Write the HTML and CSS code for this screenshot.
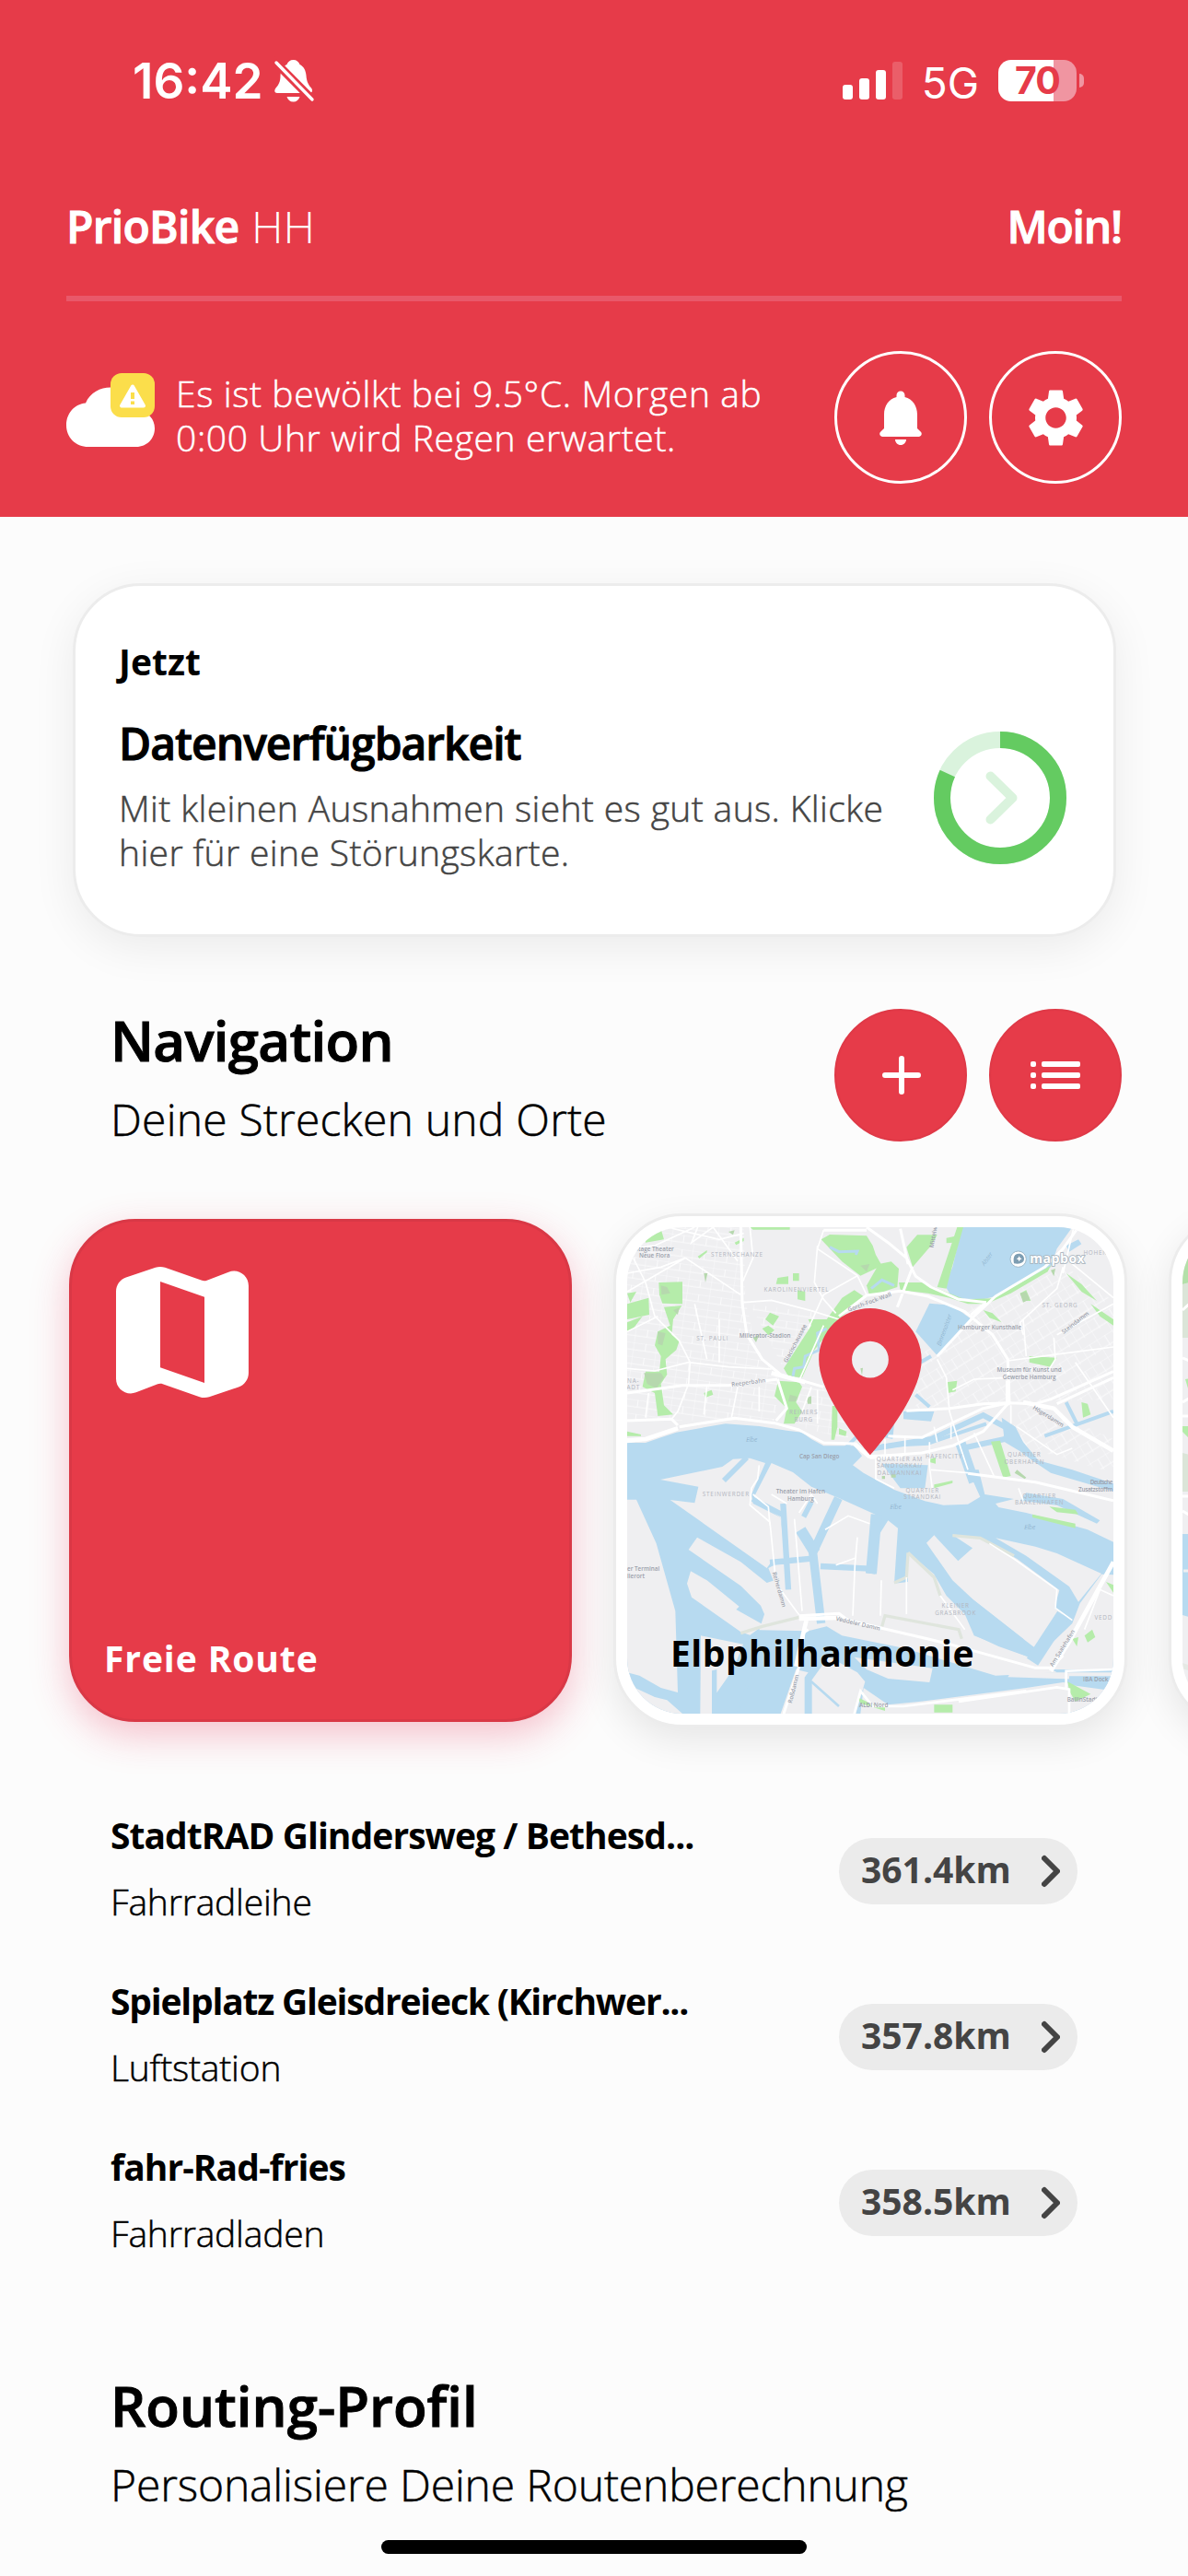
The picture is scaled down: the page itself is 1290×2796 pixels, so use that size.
FILE: index.html
```html
<!DOCTYPE html>
<html lang="de">
<head>
<meta charset="utf-8">
<title>PrioBike HH</title>
<link rel="stylesheet" href="styles.css">
</head>
<body>
<div class="screen">
  <header class="header">
    <div class="status">
      <div class="status-left">
        <span class="time">16:42</span>
        <svg class="mute" viewBox="0 0 43 46">
          <path fill="#fff" d="M20.500 0C24 0 26.500 2 27.500 5C31.500 7 34 11 34.500 17C35 24 37 27 40 30.500C42 33 41 36 38 36H3C0 36-.5 33 1.500 30.500C4.500 27 6.500 24 6.500 17C7 11 9.500 7 13.500 5C14.500 2 17 0 20.500 0ZM13.500 40H27.500C26.500 43.500 24 45.500 20.500 45.500S14.500 43.500 13.500 40Z"/>
          <path stroke="#e63b49" stroke-width="9" d="M-2-.5L45 47"/>
          <path stroke="#fff" stroke-width="3.400" stroke-linecap="round" d="M2 3L41 43"/>
        </svg>
      </div>
      <div class="status-right">
        <svg class="signal" viewBox="0 0 65 41" fill="#fff">
          <rect x="0" y="25" width="11" height="16" rx="3"/>
          <rect x="18" y="18" width="11" height="23" rx="3"/>
          <rect x="36" y="9" width="11" height="32" rx="3"/>
          <rect x="54" y="0" width="11" height="41" rx="3" opacity=".18"/>
        </svg>
        <span class="net">5G</span>
        <div class="battery"><span class="level">70</span></div>
        <span class="nub"></span>
      </div>
    </div>
    <div class="title-row">
      <div class="brand"><b>PrioBike</b> <span>HH</span></div>
      <div class="hello">Moin!</div>
    </div>
    <div class="rule"></div>
    <div class="weather">
      <svg class="cloud" viewBox="0 0 96 80">
        <path fill="#fff" d="M24 80C10 80 0 69.500 0 56.500C0 43 9.500 33.500 21 32.500C26 21 37 15.600 48 15.600C64 15.600 76 26 79 41C89 42 96 50 96 60C96 71 87.500 80 76 80Z"/>
        <rect x="48" width="48" height="48" rx="12" fill="#fbde4b"/>
        <path fill="#fff" stroke="#fff" stroke-width="4" stroke-linejoin="round" d="M72 14.500L60 35.500H84Z"/>
        <path stroke="#fbde4b" stroke-width="4" d="M72 21V28M72 30.500V34"/>
      </svg>
      <p class="forecast">Es ist bewölkt bei 9.5°C. Morgen ab<br>0:00 Uhr wird Regen erwartet.</p>
      <div class="buttons">
        <div class="round outline"><svg width="72" height="72" viewBox="0 0 24 24" fill="#fff"><path d="M12 22c1.100 0 2-.9 2-2h-4c0 1.100.89 2 2 2zm6-6v-5c0-3.070-1.640-5.640-4.500-6.320V4c0-.83-.67-1.500-1.500-1.500s-1.500.67-1.500 1.500v.68C7.630 5.360 6 7.920 6 11v5l-1.290 1.290c-.63.63-.19 1.710.7 1.710h13.170c.89 0 1.340-1.080.71-1.710L18 16z"/></svg></div>
        <div class="round outline"><svg width="75" height="75" viewBox="0 0 24 24" fill="#fff"><path d="M19.140 12.940c.04-.3.06-.61.06-.94 0-.32-.02-.64-.07-.94l2.030-1.580c.18-.14.23-.41.12-.61l-1.920-3.320c-.12-.22-.37-.29-.59-.22l-2.390.96c-.5-.38-1.030-.7-1.620-.94l-.36-2.540c-.04-.24-.24-.41-.48-.41h-3.840c-.24 0-.43.17-.47.41l-.36 2.540c-.59.24-1.130.57-1.620.94l-2.390-.96c-.22-.08-.47 0-.59.22L2.740 8.870c-.12.21-.08.47.12.61l2.030 1.580c-.05.3-.09.63-.09.94s.02.64.07.94l-2.030 1.580c-.18.14-.23.41-.12.61l1.920 3.320c.12.22.37.29.59.22l2.390-.96c.5.38 1.030.7 1.620.94l.36 2.540c.05.24.24.41.48.41h3.840c.24 0 .44-.17.47-.41l.36-2.540c.59-.24 1.130-.56 1.620-.94l2.390.96c.22.08.47 0 .59-.22l1.920-3.320c.12-.22.07-.47-.12-.61l-2.010-1.580zM12 15.600c-1.980 0-3.600-1.620-3.600-3.600s1.620-3.600 3.600-3.600 3.600 1.620 3.600 3.600-1.620 3.600-3.600 3.600z"/></svg></div>
      </div>
    </div>
  </header>

  <main>
    <section class="info-card">
      <div class="info-text">
        <h4>Jetzt</h4>
        <h3>Datenverfügbarkeit</h3>
        <p>Mit kleinen Ausnahmen sieht es gut aus. Klicke<br>hier für eine Störungskarte.</p>
      </div>
      <svg class="ring" viewBox="0 0 144 144" fill="none">
        <circle cx="72" cy="72" r="63" stroke="#daf3dd" stroke-width="18"/>
        <circle cx="72" cy="72" r="63" stroke="#64cb61" stroke-width="18" pathLength="100" stroke-dasharray="81.900 100" transform="rotate(-90 72 72)"/>
        <path d="M61.500 48.500L85.500 72L61.500 95.500" stroke="#daf3dd" stroke-width="10" stroke-linecap="round" stroke-linejoin="round"/>
      </svg>
    </section>

    <section class="section nav">
      <div>
        <h2>Navigation</h2>
        <p class="sub sub-nav">Deine Strecken und Orte</p>
      </div>
      <div class="buttons">
        <div class="round solid"><svg width="72" height="72" viewBox="0 0 72 72" stroke="#fff" stroke-width="6" stroke-linecap="round"><path d="M37 18V54M19 36H55"/></svg></div>
        <div class="round solid"><svg width="72" height="72" viewBox="0 0 72 72" fill="#fff"><rect x="9" y="21" width="6" height="6" rx="2"/><rect x="9" y="33" width="6" height="6" rx="2"/><rect x="9" y="45" width="6" height="6" rx="2"/><rect x="21" y="21" width="42" height="6" rx="2"/><rect x="21" y="33" width="42" height="6" rx="2"/><rect x="21" y="45" width="42" height="6" rx="2"/></svg></div>
      </div>
    </section>

    <section class="carousel">
      <article class="free-card">
        <svg width="192" height="192" viewBox="0 0 24 24" fill="#fff"><path d="M14.650 4.980l-5-1.750c-.42-.15-.88-.15-1.300-.01L4.360 4.560C3.550 4.840 3 5.600 3 6.460v11.850c0 1.410 1.410 2.370 2.720 1.860l2.930-1.140c.22-.09.47-.09.69-.01l5 1.750c.42.15.88.15 1.300.01l3.990-1.340c.81-.27 1.360-1.040 1.360-1.900V5.690c0-1.410-1.410-2.370-2.720-1.860l-2.930 1.140c-.22.08-.46.09-.69.01zM15 18.890l-6-2.110V5.110l6 2.110v11.670z"/></svg>
        <span>Freie Route</span>
      </article>

      <article class="map-card">
        <svg class="map" viewBox="0 0 1584 1584" fill="none">
          <defs>
            <pattern id="grid-a" width="74" height="46" patternUnits="userSpaceOnUse" patternTransform="rotate(8)"><path d="M0 0H74M0 0V46M40 0V24M0 24H74" stroke="#fafafb" stroke-width="3"/></pattern>
            <pattern id="grid-b" width="58" height="66" patternUnits="userSpaceOnUse" patternTransform="rotate(-32)"><path d="M0 0H58M0 0V66M30 0V40M0 34H58" stroke="#fafafb" stroke-width="3"/></pattern>
          </defs>
          <rect width="1584" height="1584" fill="#efeff1"/>
          <path fill="url(#grid-a)" d="M0 0H380L385 240L420 390L500 500L480 630L0 630ZM400 250L620 280L520 480ZM540 520L720 530V690L560 650Z"/>
          <path fill="url(#grid-b)" d="M1090 270L1430 130L1584 240V560L1240 570L940 590V440ZM1290 560L1584 690V800L1240 700Z"/>

          <!-- water -->
          <g fill="#b7daf0">
            <path d="M0 702L60 702L110 685L160 668L250 652L320 640L430 648L520 662L570 668L600 690L640 712L740 712L765 745L735 775L770 800L870 855L970 892L1030 905L1110 902L1150 878L1110 790L1145 790L1165 870L1260 885L1200 900L1210 912L1300 930L1420 962L1500 985L1584 1025V1584H0Z"/>
            <path d="M1090 0H1450L1400 70L1380 130L1260 190L1200 225L1160 235L1060 232L1035 190L1060 130Z"/>
            <path d="M985 248L1060 255L1122 300L1010 418L940 340Z"/>
            <path d="M900 600L1000 600L990 632L900 625ZM820 640L870 640L865 690L820 680ZM1220 620L1265 650L1290 700L1340 760L1450 790L1584 835V860L1380 800L1320 760L1280 730L1230 700Z"/>
            <path d="M830 770L980 775L970 850L890 850Z"/>
            <path d="M1300 865L1420 885L1540 955L1530 965L1400 905L1280 890Z"/>
            <path d="M1430 60L1470 40L1480 55L1440 80Z"/>
          </g>
          <g stroke="#b7daf0">
            <path stroke-width="18" d="M790 722L990 690L1160 612L1230 650M1090 720L1230 690L1260 650"/>
            <path stroke-width="12" d="M830 712L980 704L1170 640M940 545L985 585M955 440L990 420M1430 570L1465 640M1360 680L1584 600M700 730L790 640"/>
            <path stroke-width="34" d="M1085 700L1130 830"/>
          </g>

          <!-- port islands -->
          <g fill="#efeff1">
            <path d="M0 887H30L95 1030L157 1250L165 1515L110 1500L40 1460L0 1450Z"/>
            <path d="M0 1488L90 1530L130 1540L180 1584H0Z"/>
            <path d="M108 822L310 780L345 755L400 752L450 768L405 870L410 900L500 945L515 1080L470 1090L455 1110L140 888L220 898L232 845Z"/>
            <path d="M228 1010L370 1090L455 1158L480 1150L560 1262L460 1290L435 1232L370 1168L200 1050Z"/>
            <path d="M207 1120L260 1150L365 1235L355 1245L445 1295L400 1328L370 1318L210 1205L195 1160Z"/>
            <path d="M470 768L540 798L600 845L690 882L808 935L800 1000L778 1125L808 1130L815 1010L850 955L882 980L870 1160L915 1155V1058L1000 1130L1040 1200L1100 1260L1130 1330L1310 1400L1400 1450L1200 1460L900 1370L700 1330L650 1300L590 1315L430 1312L480 1160L460 1110L520 1080L500 945L410 885Z"/>
            <path d="M975 1028L1000 1003L1078 1087L1125 1045L1060 1002L1150 1012L1270 1080L1408 1182L1392 1240L1420 1262L1335 1375L1290 1340L1130 1215L1060 1150Z"/>
            <path d="M1584 1132L1545 1130L1475 1225L1450 1290L1310 1425L1340 1440H1584Z"/>
            <path d="M1200 1012L1330 1040L1400 1062L1545 1128L1470 1220L1440 1170L1300 1070Z"/>
            <path d="M240 1330L378 1358L345 1440L292 1516V1440L276 1444V1584H238Z"/>
            <path d="M590 1450L650 1395L750 1450L775 1480L745 1584H500L550 1440Z"/>
            <path d="M740 1400L995 1436L985 1482L850 1470L780 1440Z"/>
            <path d="M770 1500L850 1555L950 1545L1300 1500L1420 1482L1584 1500V1584H760Z"/>
            <path d="M1250 1450H1584V1475L1400 1470L1240 1465Z"/>
          </g>
          <path fill="#b7daf0" d="M1440 1462H1584V1510L1440 1490Z"/>
          <path fill="#b7daf0" d="M1000 1130L1130 1215L1290 1340L1310 1400L1210 1365L1135 1330L1100 1255L1040 1195Z"/>
          <g stroke="#b7daf0">
            <path stroke-width="17" d="M315 825L390 750M408 885L510 938M600 895L575 943"/>
            <path stroke-width="19" d="M508 900L525 1180M465 1092L610 1078M630 1104L790 1112"/>
            <path stroke-width="28" d="M688 882L605 1060L632 1290"/>
            <path stroke-width="36" d="M565 985L612 1060M812 935L795 1128"/>
            <path stroke-width="44" d="M1420 1262L1320 1415"/>
            <path stroke-width="24" d="M590 1330L640 1400L590 1470L590 1584"/>
            <path stroke-width="8" d="M600 1480L690 1560M440 1345L360 1584"/>
          </g>
          <path stroke="#dfe5dd" stroke-width="10" d="M915 1060L910 1140L870 1158M915 1060L1000 1140L1020 1200M1060 1004L1150 1012L1260 1070M370 1322L440 1300L560 1270M1090 1340L1080 1310L840 1265L830 1300"/>

          <!-- parks -->
          <g fill="#b5ecaa">
            <path d="M632 40L660 24L780 28L800 60L810 90L830 125L760 158L700 112Z"/>
            <path d="M820 120L860 112L885 135L880 195L790 225L780 190Z"/>
            <path d="M910 65L945 25H1010L990 60L930 130Z"/>
            <path d="M885 180L960 180L1050 215L1100 235L1190 232L1300 170L1380 125L1370 145L1250 215L1170 250L1110 250L1050 230L980 215L890 205Z"/>
            <path d="M700 230L740 205L770 225L690 300L610 400L570 490L525 485L510 460L600 320L590 300L650 300Z"/>
            <path d="M1075 0H1095L1050 160L1040 200L1010 195Z"/>
            <path d="M103 180L180 178V250L115 248L105 220Z"/>
            <path d="M0 250L70 230L72 285L0 300ZM0 310L50 290L20 330L0 340ZM0 215L30 210L10 245Z"/>
            <path d="M120 260L178 255L150 300L145 350L170 370L160 400L125 430L130 480L110 510L120 580L150 610L100 615L90 540L50 520L60 470L105 470L110 420L90 385L100 340L140 320Z"/>
            <path d="M60 30L110 5L120 40L60 50ZM450 300L465 278L495 290L475 320ZM440 330L460 320L480 335L460 352ZM490 165L525 160V185H485ZM555 205L580 210V240L555 235ZM540 150H560V175H540Z"/>
            <path d="M492 500L560 505L570 520L550 570L570 600L545 640L510 640L520 590L480 550Z"/>
            <path d="M668 582H685V650L675 692H665ZM690 655L715 665L712 680L690 675ZM250 540L275 530L280 545L255 555ZM230 95L260 75V82L235 102ZM350 50L380 35V45L355 58Z"/>
            <path d="M400 0H530V8H410ZM1040 35L1065 30V50L1040 52ZM1430 150L1480 185L1530 240L1480 210ZM1510 250L1584 300V320L1540 290ZM1280 215L1300 205L1315 240L1290 240ZM1160 270L1190 280L1220 310L1180 295Z"/>
            <path d="M1185 698L1215 695L1250 810L1225 815ZM1040 505L1075 500L1070 535L1045 540ZM1310 420L1400 425L1380 455L1310 440ZM1480 570L1500 575L1510 610L1485 620ZM985 755L1005 750V770L985 765ZM1000 838L1060 825V833L1000 850Z"/>
            <path d="M1375 910L1460 920L1470 935L1400 928ZM1320 935L1460 965V980L1320 945ZM0 665L45 675V680L0 680ZM1490 1330L1515 1310L1525 1335L1500 1352ZM1435 1480L1510 1520L1460 1545L1440 1510ZM750 1530L800 1555L840 1560L840 1575L760 1550ZM1000 1555H1060V1580H1000ZM1560 1155L1584 1165V1190ZM1450 1340L1470 1335L1465 1365Z"/>
          </g>
          <g fill="#b6d8ae">
            <path d="M55 475L110 475L120 490L95 525L65 510ZM110 190L130 195L140 215L112 220ZM100 340L125 345L115 385L100 380ZM150 270L170 262L165 285ZM760 125L790 120L780 145ZM330 15L350 10L345 25ZM250 150L262 150L255 180ZM410 360L430 350L420 375ZM530 545L555 552L548 568H525ZM1280 215L1300 210L1312 235L1290 245ZM1380 140L1395 135L1390 160ZM585 555L600 550V575H588ZM760 460L768 458L765 482ZM830 810H840V820H830ZM860 805H875V815H860ZM1270 790L1300 815L1295 820L1262 800Z"/>
          </g>
          <path stroke="#b7daf0" stroke-width="9" d="M660 65L690 80L750 78L745 90M795 200L830 172L870 190M650 330L620 345L625 400L580 420L575 455L545 460L540 485"/>

          <!-- streets -->
          <g stroke="#fff" stroke-width="5">
            <path d="M230 0L210 50L280 0L360 110M130 0L300 40L380 20M400 0L410 100L375 180M380 245L470 238L600 272L690 300M620 60L610 180L640 235L680 280M640 10L620 70L750 158L780 220M750 158L640 220L590 330M20 100L60 180L90 290L170 370L205 440L200 510L165 600L145 625M0 210L190 100M0 70L90 60L220 0M190 100L370 220M0 460L90 468L200 440L330 455L470 462M300 300L300 440M220 250L260 430M100 290L0 340M0 150L110 130L190 100M430 600L430 520M340 620L360 520M250 610L260 515M60 620L70 540M560 500L640 320M570 600L600 520M620 530V640M1060 530L1130 495L1240 490M1290 350L1280 310L1400 200L1420 130M1240 435L1390 415L1584 390M1390 360L1395 430L1370 470M1400 350L1584 250M1290 300L1300 420M1010 430L1040 490L1050 600L1080 700L1110 790M1130 670L1195 810M1455 0L1420 150M1420 95L1584 230M1460 440L1584 620M1250 580L1250 640M985 700V780L995 860M1275 850L1290 890M1270 650L1400 740L1450 720M840 745V690M905 680V735M1000 650L1010 700M1055 640V690"/>
            <path d="M810 755V820L870 850M990 790L1110 800M430 775L425 820L405 850L400 905L465 960L485 1160L560 1262M545 950L570 1250M465 970L460 910L410 870M645 985L720 940L790 965M750 1010L742 1100L735 1265M680 1100L742 1078M828 1150L825 1265M910 1140V1260M1020 1200L1100 1310M1180 1030L1260 1080L1400 1180L1395 1240L1450 1280M1490 1310L1540 1180L1584 1200M470 870L520 900M560 930L600 870L620 900"/>
          </g>
          <g stroke="#fff" stroke-width="9" stroke-linejoin="round">
            <path d="M0 630L145 625L165 645M370 0L375 250L390 350L440 430L500 480L570 500L640 520M0 540L180 515L330 515L490 495M490 495L520 590L485 630M170 650L350 622L480 638L560 660L640 702L740 705L790 748L960 735L1060 712L1160 665L1240 575M165 655L60 690L0 698M780 0L850 50L910 100L940 160L990 195L1080 235L1170 245M640 10H780M690 290L780 222L890 208L980 225L1100 275L1190 350L1240 430L1245 570M890 5L915 120M930 130L880 260M1584 470L1380 560L1330 575L1240 572L1160 575L1050 590L910 598M1584 490L1400 575M1470 0L1420 70L1360 130L1200 225L1130 290L1010 420M850 680L960 685L1010 660L1160 590L1240 572M1110 802L1330 830L1584 890M560 1265L690 1258L720 1280L1040 1355L1330 1435L1380 1435L1420 1395M590 1310L575 1320L570 1400L510 1584M1170 245L1120 285"/>
          </g>
          <path stroke="#fff" stroke-width="14" stroke-linejoin="round" d="M470 475L580 505M1240 500V580M1290 570L1390 590L1450 650L1584 728M0 694L60 690L165 655M560 1275L690 1272M585 1275L572 1330L550 1430M1584 1090L1440 1350L1380 1445M740 705L790 748M790 748L900 745"/>
          <path stroke="#fff" stroke-width="8" d="M1430 1500V1445L1584 1440M1080 1545L1400 1498L1440 1505V1584M740 1584L760 1510L800 1560L900 1560L1300 1510M0 1540L120 1584"/>

          <!-- labels -->
          <g class="poi" text-anchor="middle">
            <text x="89" y="78">Stage Theater</text><text x="89" y="100">Neue Flora</text>
            <text x="449" y="359">Millerntor-Stadion</text>
            <text x="1181" y="334">Hamburger Kunsthalle</text>
            <text x="1310" y="471">Museum für Kunst und</text><text x="1310" y="494">Gewerbe Hamburg</text>
            <text x="565" y="867">Theater im Hafen</text><text x="565" y="890">Hamburg</text>
            <text x="626" y="754">Cap San Diego</text>
            <text x="395" y="512" transform="rotate(-7 395 506)">Reeperbahn</text>
            <text x="790" y="250" transform="rotate(-20 790 245)">Gorch-Fock-Wall</text>
            <text x="550" y="388" transform="rotate(-62 546 382)">Glacischaussee</text>
            <text x="1372" y="622" transform="rotate(32 1372 616)">Högerdamm</text>
            <text x="1460" y="317" transform="rotate(-38 1460 311)">Steindamm</text>
            <text x="492" y="1190" transform="rotate(74 496 1184)">Reiherdamm</text>
            <text x="752" y="1297" transform="rotate(13 752 1291)">Veddeler Damm</text>
            <text x="542" y="1509" transform="rotate(-76 542 1503)">Roßdamm</text>
            <text x="1418" y="1377" transform="rotate(-58 1418 1371)">Am Saalehafen</text>
            <text x="998" y="38" transform="rotate(-80 998 32)">Mittelw</text>
            <text x="803" y="1563">ALDI Nord</text><text x="1483" y="1546">BallinStadt</text><text x="1526" y="1479">IBA Dock</text>
          </g>
          <g class="poi"><text x="0" y="1119">er Terminal</text><text x="0" y="1142">llerort</text><text x="1508" y="837" textLength="74">Deutsche</text><text x="1470" y="860" textLength="112">Zusatzstoffm</text></g>
          <g class="quarter" text-anchor="middle">
            <text x="358" y="95">STERNSCHANZE</text><text x="552" y="211">KAROLINENVIERTEL</text><text x="278" y="368">ST. PAULI</text>
            <text x="575" y="610">REIMERS</text><text x="575" y="632">BURG</text><text x="322" y="877">STEINWERDER</text>
            <text x="1410" y="261">ST. GEORG</text><text x="1032" y="752">HAFENCITY</text>
            <text x="888" y="762">QUARTIER AM</text><text x="888" y="784">SANDTORKAI/</text><text x="888" y="806">DALMANNKAI</text>
            <text x="962" y="863">QUARTIER</text><text x="962" y="885">STRANDKAI</text>
            <text x="1294" y="748">QUARTIER</text><text x="1294" y="770">OBERHAFEN</text>
            <text x="1343" y="882">QUARTIER</text><text x="1343" y="904">BAAKENHAFEN</text>
            <text x="1070" y="1240">KLEINER</text><text x="1070" y="1262">GRASBROOK</text>
            <text x="1526" y="91">HOHEN</text><text x="1552" y="1277">VEDD</text><text x="20" y="506">NA-</text><text x="20" y="528">ADT</text>
          </g>
          <g class="river" text-anchor="middle">
            <text x="406" y="698">Elbe</text><text x="875" y="918">Elbe</text><text x="1312" y="983">Elbe</text>
            <text x="1173" y="110" transform="rotate(-55 1173 104)">Alster</text>
            <text x="1034" y="341" transform="rotate(-70 1034 335)">Binnenalster</text>
          </g>
          <circle cx="1274" cy="104" r="26" fill="#fff" stroke="#9db8c9" stroke-width="3"/>
          <path fill="#7d9db2" d="M1260 118C1256 98 1262 86 1276 86C1286 86 1293 94 1293 103C1293 117 1279 121 1260 118Z"/>
          <path fill="#fff" d="M1277 94L1280 100L1286 103L1280 106L1277 112L1274 106L1268 103L1274 100Z"/>
          <text class="mapbox" x="1312" y="117" textLength="178">mapbox</text>

          <path fill="#e63b49" fill-rule="evenodd" transform="translate(505 216) scale(23.900)" d="M12 2C8.130 2 5 5.130 5 9c0 5.250 7 13 7 13s7-7.750 7-13c0-3.870-3.130-7-7-7zm0 9.500a2.500 2.500 0 010-5 2.500 2.500 0 010 5z"/>
        </svg>
        <span class="map-title">Elbphilharmonie</span>
      </article>

      <article class="map-card">
        <svg class="map" viewBox="0 0 528 528">
          <rect width="528" height="528" fill="#efeff1"/>
          <path fill="#b3e0a9" d="M0 0H40V55L0 62Z"/>
          <path fill="#dbe5d8" d="M0 62L40 50V120H0ZM0 245L40 255V287H0Z"/>
          <path fill="#b5ecaa" d="M3 165L40 160V175H6ZM0 216H8V230L0 222Z"/>
          <path stroke="#fff" stroke-width="3" d="M0 90L20 72M0 205H20M0 292H20M0 308L20 320M0 142L20 150M0 190L20 178"/>
          <path fill="#b7daf0" d="M0 333H100V450L0 421Z"/>
          <path stroke="#efeff1" stroke-width="3" d="M1 373H30"/>
          <path fill="#e5e9e4" d="M0 473L20 480V486L0 479Z"/>
        </svg>
      </article>
    </section>

    <section class="places">
      <div class="place">
        <div><h4>StadtRAD Glindersweg / Bethesd...</h4><p>Fahrradleihe</p></div>
        <div class="pill"><span>361.4km</span><svg viewBox="0 0 20 36"><path d="M3 4L17 18L3 32"/></svg></div>
      </div>
      <div class="place">
        <div><h4 class="tight">Spielplatz Gleisdreieck (Kirchwer...</h4><p>Luftstation</p></div>
        <div class="pill"><span>357.8km</span><svg viewBox="0 0 20 36"><path d="M3 4L17 18L3 32"/></svg></div>
      </div>
      <div class="place">
        <div><h4>fahr-Rad-fries</h4><p>Fahrradladen</p></div>
        <div class="pill"><span>358.5km</span><svg viewBox="0 0 20 36"><path d="M3 4L17 18L3 32"/></svg></div>
      </div>
    </section>

    <section class="section routing">
      <div>
        <h2 class="h2-routing">Routing-Profil</h2>
        <p class="sub sub-routing">Personalisiere Deine Routenberechnung</p>
      </div>
    </section>
  </main>
  <div class="home-indicator"></div>
</div>
</body>
</html>
```

FILE: styles.css
```css
* { box-sizing: border-box; margin: 0; padding: 0; }
body { background: #fcfcfc; }
svg { display: block; flex: none; }

.screen {
  position: relative;
  width: 1290px;
  height: 2796px;
  overflow: hidden;
  background: #fcfcfc;
  color: #000;
  font-family: "Open Sans", "Noto Sans", sans-serif;
  font-weight: 300;
  font-size: 39px;
  line-height: 48px;
  white-space: nowrap;
}
h2, h3, h4, b { font-weight: 700; }
h2, h3, .brand b, .hello { font-weight: 600; -webkit-text-stroke: 1px currentColor; }
p { -webkit-text-stroke: .5px currentColor; }

/* header */
.header { height: 561px; padding: 0 72px; background: #e63b49; color: #fff; }
.status {
  height: 175px;
  margin: 0 -72px;
  padding: 0 113px 0 144px;
  display: flex;
  align-items: center;
  justify-content: space-between;
  font-family: Inter, "Liberation Sans", sans-serif;
}
.status-left, .status-right { display: flex; align-items: center; }
.time { font-size: 53px; font-weight: 600; line-height: 64px; }
.mute { width: 43px; height: 46px; margin-left: 12px; overflow: visible; }
.signal { width: 65px; height: 41px; }
.net { font-size: 46px; font-weight: 400; line-height: 56px; margin: 4px 21px 0 21px; }
.battery {
  width: 85px;
  height: 45px;
  border-radius: 14px;
  background: linear-gradient(to right, #fff 60px, #f095a1 60px);
  display: flex;
  align-items: center;
  justify-content: center;
}
.level { color: #e63b49; font-size: 41px; font-weight: 700; line-height: 45px; letter-spacing: -1px; }
.nub { width: 5px; height: 15px; margin-left: 3px; border-radius: 0 5px 5px 0; background: #f095a1; }

.title-row { height: 141px; display: flex; align-items: center; justify-content: space-between; font-size: 48px; line-height: 60px; }
.brand b { letter-spacing: -.7px; }
.hello { letter-spacing: -1.2px; }
.brand span { margin-left: 1px; }
.rule { height: 6px; margin-top: 5px; background: #e9586a; }
.weather { height: 144px; margin-top: 54px; display: flex; align-items: center; }
.cloud { width: 96px; height: 80px; margin-top: -16px; }
.forecast { flex: 1; margin: -5px 0 0 23px; letter-spacing: .62px; }
.buttons { display: flex; gap: 24px; }
.round { width: 144px; height: 144px; border-radius: 50%; display: flex; align-items: center; justify-content: center; }
.outline { border: 3px solid #fff; }
.solid { background: #e63b49; border: 2px solid #df3947; }

/* status card */
.info-card {
  height: 384px;
  margin: 72px 78px 0 79px;
  padding: 58px 51px 0 47px;
  display: flex;
  background: #fff;
  border: 3px solid #ececec;
  border-radius: 74px;
  box-shadow: 0 12px 48px rgba(0, 0, 0, .07);
}
.info-text { flex: 1; }
.info-text h3 { margin: 35px 0 16px; font-size: 48px; line-height: 60px; letter-spacing: -1px; }
.info-text p { color: #444; letter-spacing: .38px; }
.ring { width: 144px; height: 144px; margin-top: 100px; }

/* section headings */
.section { display: flex; justify-content: space-between; align-items: flex-start; padding: 0 72px 0 120px; }
.section h2 { font-size: 60px; line-height: 72px; letter-spacing: -.7px; }
.section .h2-routing { letter-spacing: 0; }
.sub { margin-top: 18px; font-size: 48px; line-height: 64px; }
.sub-nav { letter-spacing: .2px; }
.sub-routing { letter-spacing: -.15px; }
.nav { margin-top: 76px; }
.nav .buttons { margin-top: 2px; }
.routing { margin-top: 97px; }

/* shortcuts */
.carousel { display: flex; align-items: center; gap: 45px; margin-top: 70px; padding-left: 75px; }
.free-card {
  flex: none;
  width: 546px;
  height: 546px;
  padding: 24px 24px 42px;
  display: flex;
  flex-direction: column;
  justify-content: space-between;
  background: #e63b49;
  border: 3px solid #d93846;
  border-radius: 72px;
  box-shadow: 0 14px 42px rgba(230, 40, 80, .28);
  color: #fff;
  font-weight: 700;
  letter-spacing: .9px;
}
.free-card span { margin-left: 11px; }
.map-card {
  position: relative;
  flex: none;
  width: 558px;
  height: 558px;
  padding: 12px;
  background: #fff;
  border: 3px solid #ececec;
  border-radius: 75px;
  box-shadow: 0 14px 42px rgba(0, 0, 0, .09);
}
.map { width: 528px; height: 528px; border-radius: 60px; }
.map-title { position: absolute; left: 59px; top: 450px; font-weight: 700; letter-spacing: .5px; }
.poi { font-size: 19px; font-weight: 600; fill: #9b9fab; }
.quarter { font-size: 19px; font-weight: 400; letter-spacing: 2.4px; fill: #b2b5be; }
.river { font-size: 20px; font-style: italic; fill: #7ea3c0; }
.mapbox { font-size: 42px; font-weight: 700; fill: #fff; stroke: #a3b0ba; stroke-width: 5px; paint-order: stroke; }

/* places */
.places { margin-top: 63px; }
.place { height: 180px; padding: 0 120px 0 120px; display: flex; align-items: center; justify-content: space-between; }
.place h4 { letter-spacing: -.95px; }
.place .tight { letter-spacing: -1.2px; }
.place p { margin-top: 24px; letter-spacing: -.2px; }
.pill {
  width: 259px;
  height: 72px;
  margin-top: 6px;
  padding: 0 19px 0 24px;
  display: flex;
  align-items: center;
  justify-content: space-between;
  border-radius: 36px;
  background: #ebebeb;
  color: #444;
  font-weight: 700;
}
.pill span { margin-top: -4px; }
.pill svg { width: 20px; height: 36px; fill: none; stroke: #444; stroke-width: 6px; stroke-linecap: round; stroke-linejoin: round; }

.home-indicator { position: absolute; left: 414px; top: 2757px; width: 462px; height: 15px; border-radius: 8px; background: #000; }
```
